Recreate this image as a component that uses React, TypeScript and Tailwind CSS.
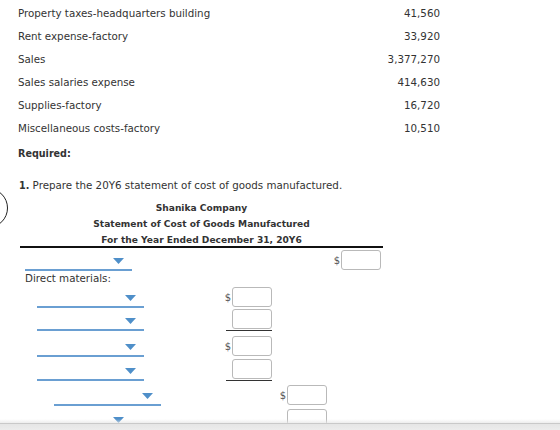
import type { ReactNode } from "react";

const costItems = [
  { label: "Property taxes-headquarters building", amount: "41,560" },
  { label: "Rent expense-factory", amount: "33,920" },
  { label: "Sales", amount: "3,377,270" },
  { label: "Sales salaries expense", amount: "414,630" },
  { label: "Supplies-factory", amount: "16,720" },
  { label: "Miscellaneous costs-factory", amount: "10,510" },
];

function Caret() {
  return (
    <svg viewBox="0 0 11 6" className="h-[6px] w-[11px]" aria-hidden="true">
      <path d="M0 0h11L5.5 6z" fill="#4f8fc9" />
    </svg>
  );
}

function Picker({ indent }: { indent: string }) {
  return (
    <div className={indent}>
      <div className="flex h-[14px] w-[107px] items-start justify-end border-b-2 border-[#6a9fd2] pr-[8px] pt-[1px]">
        <Caret />
      </div>
    </div>
  );
}

function Amount({ dollar, rule }: { dollar?: boolean; rule?: boolean }) {
  return (
    <div
      className={`flex w-[46px] items-center justify-end pb-[1px] ${
        rule ? "border-b border-[#333]" : ""
      }`}
    >
      {dollar && <span className="mr-[1px] text-[10px] text-[#555]">$</span>}
      <div className="h-[20px] w-[40px] shrink-0 rounded-[3px] border border-[#b9b9b9] bg-white" />
    </div>
  );
}

function Row({
  h,
  left,
  c2,
  c3,
  c4,
}: {
  h: string;
  left?: ReactNode;
  c2?: ReactNode;
  c3?: ReactNode;
  c4?: ReactNode;
}) {
  return (
    <div className={`flex items-end ${h}`}>
      <div className="w-[202px]">{left}</div>
      <div className="flex w-[52px] justify-end pr-[2px]">{c2}</div>
      <div className="flex w-[55px] justify-end pr-[2px]">{c3}</div>
      <div className="flex w-[54px] justify-end pr-[2px]">{c4}</div>
    </div>
  );
}

export default function App() {
  return (
    <div className="relative h-[430px] w-[560px] overflow-hidden bg-white font-['DejaVu_Sans',Verdana,sans-serif] text-[10.3px] text-[#333]">
      {/* cost data */}
      <div className="w-[440px] pl-[18px] pt-[2px]">
        {costItems.map((item) => (
          <div key={item.label} className="flex h-[23px] items-center justify-between">
            <span>{item.label}</span>
            <span>{item.amount}</span>
          </div>
        ))}
      </div>

      <div className="mt-[7px] pl-[18px] text-[9.6px] font-bold leading-[14px]">Required:</div>
      <div className="mt-[17px] pl-[19px] leading-[14px]">
        <span className="text-[9.6px] font-bold">1.</span> Prepare the 20Y6 statement of cost of goods manufactured.
      </div>

      {/* question marker */}
      <div className="absolute left-[-32px] top-[188px] h-[40px] w-[40px] rounded-full border-[1.5px] border-[#222]" />

      <div className="ml-[20px] mt-[7px] w-[363px]">
        <div className="border-b-2 border-[#111] text-center text-[9.1px] font-bold leading-[16px]">
          <div>Shanika Company</div>
          <div>Statement of Cost of Goods Manufactured</div>
          <div className="h-[14px]">For the Year Ended December 31, 20Y6</div>
        </div>

        <Row h="h-[23px]" left={<Picker indent="pl-[5px]" />} c4={<Amount dollar />} />
        <Row h="h-[14px]" left={<div className="pl-[5px] leading-[14px]">Direct materials:</div>} />
        <Row h="h-[23px]" left={<Picker indent="pl-[17px]" />} c2={<Amount dollar />} />
        <Row h="h-[23px]" left={<Picker indent="pl-[17px]" />} c2={<Amount rule />} />
        <Row h="h-[26px]" left={<Picker indent="pl-[17px]" />} c2={<Amount dollar />} />
        <Row h="h-[24px]" left={<Picker indent="pl-[17px]" />} c2={<Amount rule />} />
        <Row h="h-[25px]" left={<Picker indent="pl-[34px]" />} c3={<Amount dollar />} />
        <Row h="h-[24px]" left={<Picker indent="pl-[5px]" />} c3={<Amount />} />
      </div>

      {/* bottom edge of the scroll panel */}
      <div className="absolute bottom-0 left-0 h-[11px] w-full bg-gradient-to-b from-white/0 via-[#e6e6e6] to-[#ececec]">
        <div className="mt-[4px] h-[1px] w-full bg-[#c9c9c9]" />
      </div>
    </div>
  );
}
